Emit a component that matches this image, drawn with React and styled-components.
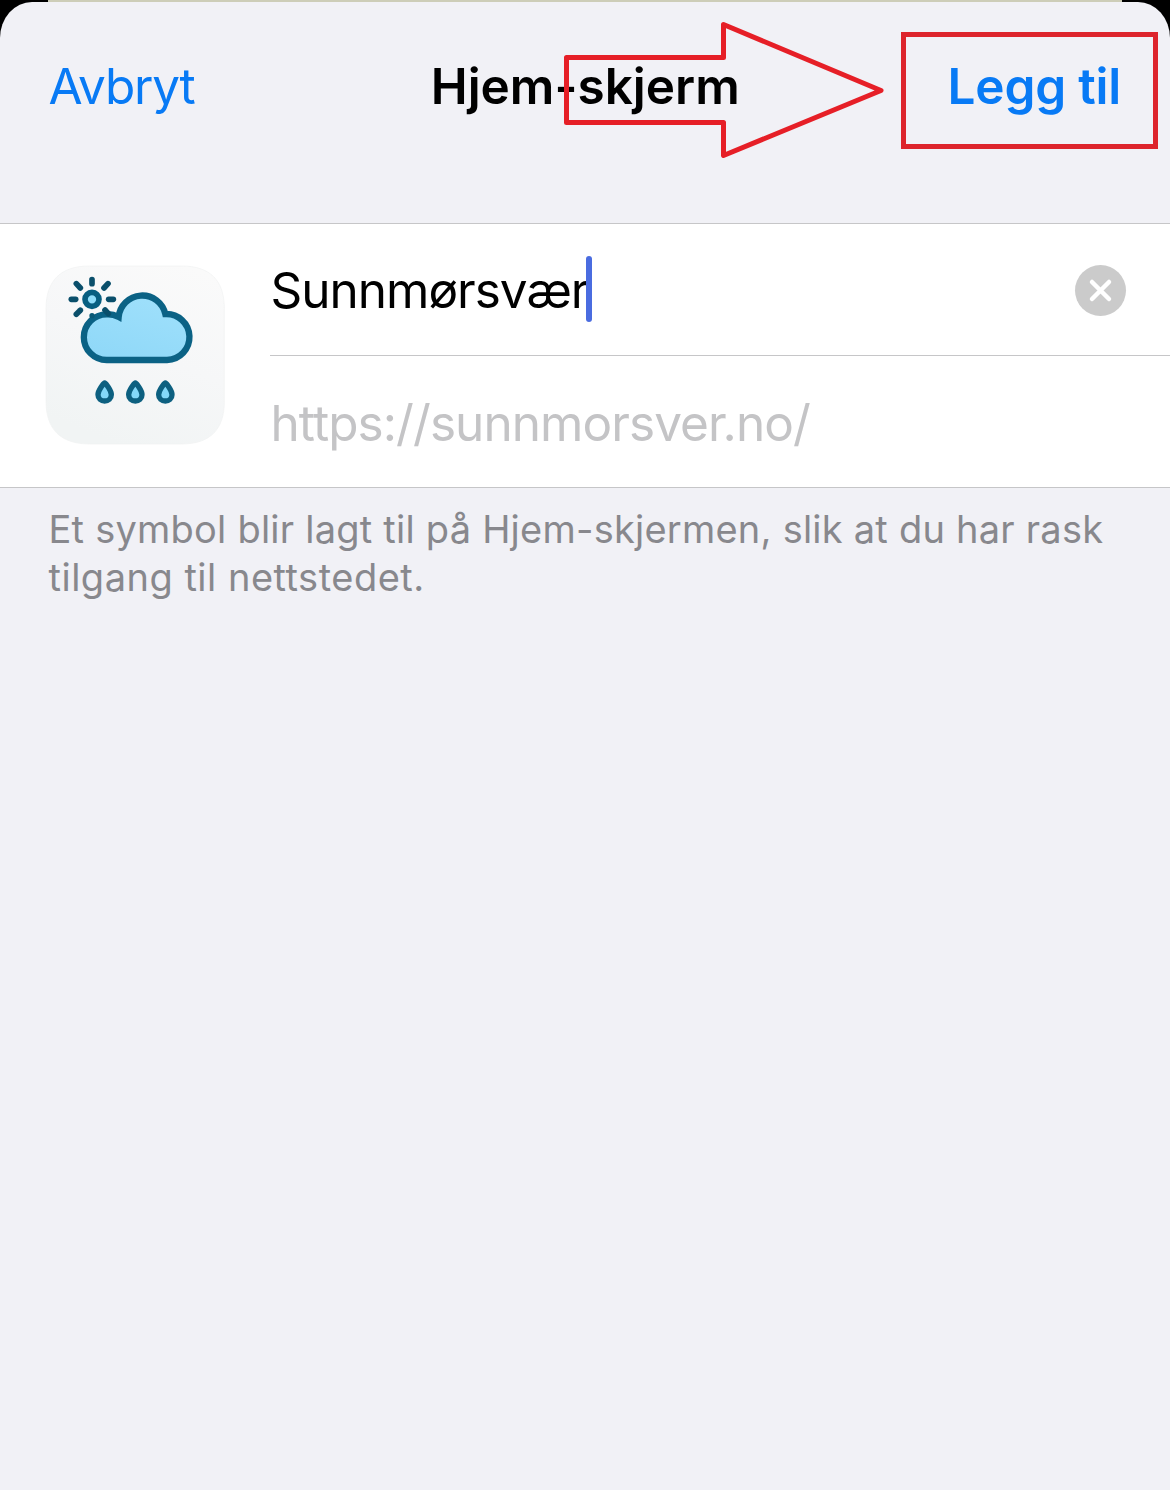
import React from 'react';
import styled, { createGlobalStyle } from 'styled-components';

const GlobalStyle = createGlobalStyle`
  * { box-sizing: border-box; }
  body { margin: 0; background: #f1f1f6; }
`;

const Backdrop = styled.div`
  width: 1170px;
  height: 1490px;
  padding-top: 2px;
  overflow: hidden;
  background: linear-gradient(90deg, #000 48px, #cdcdb8 48px, #cdcdb8 1122px, #000 1122px);
  font-family: Inter, 'Liberation Sans', sans-serif;
`;

const Sheet = styled.main`
  position: relative;
  height: 1488px;
  background: #f1f1f6;
  border-radius: 32px 32px 0 0 / 36px 36px 0 0;
`;

const Header = styled.header`
  display: grid;
  grid-template-columns: 1fr auto 1fr;
  align-items: start;
  height: 221px;
  padding: 52px 49px 0 48.5px;
`;

const BarButton = styled.button`
  justify-self: ${(p) => (p.$end ? 'end' : 'start')};
  padding: 0;
  border: 0;
  background: none;
  color: #087af5;
  font-family: inherit;
  font-size: 49.5px;
  line-height: 64px;
  font-weight: ${(p) => (p.$strong ? 600 : 400)};
  letter-spacing: ${(p) => p.$tracking}px;
  white-space: nowrap;
`;

const Title = styled.h1`
  margin: 0;
  padding-left: 1px;
  color: #000;
  font-size: 49.5px;
  line-height: 64px;
  font-weight: 600;
  letter-spacing: 0;
  white-space: nowrap;
`;

const Card = styled.section`
  display: flex;
  height: 265px;
  padding-left: 45px;
  background: #fff;
  border-top: 1px solid #c6c6c8;
  border-bottom: 1px solid #c6c6c8;
`;

const AppIcon = styled.svg`
  display: block;
  flex: none;
  width: 180px;
  height: 180px;
  margin: 41px 45px 0 0;
`;

const Fields = styled.div`
  flex: 1;
`;

const FieldRow = styled.div`
  display: flex;
  align-items: center;
  height: ${(p) => p.$height}px;
  padding: ${(p) => p.$top || 0}px 44px 0 0.5px;
  border-bottom: ${(p) => (p.$divided ? '1px solid #c6c6c8' : '0')};
`;

const FieldText = styled.span`
  color: ${(p) => (p.$muted ? '#c4c4c6' : '#000')};
  font-size: 49.5px;
  line-height: 64px;
  letter-spacing: ${(p) => p.$tracking}px;
  white-space: nowrap;
`;

const Caret = styled.span`
  width: 6px;
  height: 66px;
  margin: -2px auto 0 -2px;
  border-radius: 3px;
  background: #4a6ce0;
`;

const ClearButton = styled.button`
  display: flex;
  width: 51px;
  height: 51px;
  margin-top: 2px;
  padding: 0;
  border: 0;
  border-radius: 50%;
  background: #cbcbcb;
`;

const Note = styled.p`
  margin: 0;
  padding: 17px 49px 0 48.5px;
  color: #88888d;
  font-size: 38px;
  line-height: 48px;
`;

const NoteLine = styled.span`
  display: block;
  letter-spacing: ${(p) => p.$tracking}px;
  white-space: nowrap;
`;

const Highlight = styled.div`
  position: absolute;
  left: 901px;
  top: 30px;
  width: 257px;
  height: 117px;
  border: 5px solid #dd242c;
`;

const Arrow = styled.svg`
  position: absolute;
  left: 560px;
  top: 18px;
  width: 330px;
  height: 145px;
`;

const rays = [
  [186, 89, 186, 101],
  [139, 101, 151, 114],
  [234, 101, 222, 114],
  [124, 148, 137, 148],
  [236, 148, 250, 148],
  [139, 193, 151, 181],
  [225, 180, 235, 191],
];

function WeatherIcon() {
  return (
    <AppIcon viewBox="45 45 540 540">
      <defs>
        <linearGradient id="tile" x1="0.8" y1="0" x2="0.4" y2="1">
          <stop offset="0" stopColor="#fafafa" />
          <stop offset="0.5" stopColor="#f6f7f8" />
          <stop offset="1" stopColor="#f1f4f4" />
        </linearGradient>
        <linearGradient id="cloud" x1="0.2" y1="1" x2="0.7" y2="0">
          <stop offset="0" stopColor="#8fd8f8" />
          <stop offset="1" stopColor="#9fe0fb" />
        </linearGradient>
      </defs>
      <path
        d="M178 48H455C540 48 583 91 583 176V454C583 539 540 582 455 582H178C93 582 48 539 48 454V176C48 91 93 48 178 48Z"
        fill="url(#tile)" stroke="#f0f2f2" strokeWidth="2"
      />
      <path
        d="M230 330H411A69.05 69.05 0 1 0 406 192A71 71 0 0 0 266 201C254 195 242 192 230 193A68.5 68.5 0 0 0 230 330Z"
        fill="url(#cloud)" stroke="#0b6285" strokeWidth="19" strokeLinejoin="miter"
      />
      <circle cx="186" cy="148" r="21" fill="#8fdcf9" stroke="#075e80" strokeWidth="17" />
      {rays.map(([x1, y1, x2, y2]) => (
        <line key={`${x1}-${y1}`} x1={x1} y1={y1} x2={x2} y2={y2} stroke="#0a4f6b" strokeWidth="17" strokeLinecap="round" />
      ))}
      <circle cx="186" cy="197" r="8" fill="#0a5876" />
      {[224, 316, 406].map((x) => (
        <path
          key={x}
          transform={`translate(${x} 0)`}
          d="M0 399C-4 401 -20 421 -20 434C-20 446 -11 453 0 453C11 453 20 446 20 434C20 421 4 401 0 399Z"
          fill="#84d8f8" stroke="#0d6080" strokeWidth="16" strokeLinejoin="round"
        />
      ))}
    </AppIcon>
  );
}

export default function App() {
  return (
    <Backdrop>
      <GlobalStyle />
      <Sheet>
        <Header>
          <BarButton $tracking={-1.2}>Avbryt</BarButton>
          <Title>Hjem-skjerm</Title>
          <BarButton $end $strong $tracking={-0.2}>Legg til</BarButton>
        </Header>
        <Card>
          <WeatherIcon />
          <Fields>
            <FieldRow $height={132} $divided>
              <FieldText $tracking={-1}>Sunnmørsvær</FieldText>
              <Caret />
              <ClearButton aria-label="Tøm">
                <svg width="51" height="51" viewBox="0 0 51 51">
                  <path d="M17 17L34 34M34 17L17 34" stroke="#fff" strokeWidth="4.5" strokeLinecap="round" />
                </svg>
              </ClearButton>
            </FieldRow>
            <FieldRow $height={131} $top={2}>
              <FieldText $muted $tracking={-0.93}>https://sunnmorsver.no/</FieldText>
            </FieldRow>
          </Fields>
        </Card>
        <Note>
          <NoteLine $tracking={0.23}>Et symbol blir lagt til på Hjem-skjermen, slik at du har rask</NoteLine>
          <NoteLine $tracking={0.5}>tilgang til nettstedet.</NoteLine>
        </Note>
        <Arrow viewBox="560 20 330 145">
          <path
            d="M566.5 57.5H723.5V24.5L881 90.5L723.5 155.5V122.5H566.5Z"
            fill="none" stroke="#e61f27" strokeWidth="5" strokeLinejoin="round"
          />
        </Arrow>
        <Highlight />
      </Sheet>
    </Backdrop>
  );
}
